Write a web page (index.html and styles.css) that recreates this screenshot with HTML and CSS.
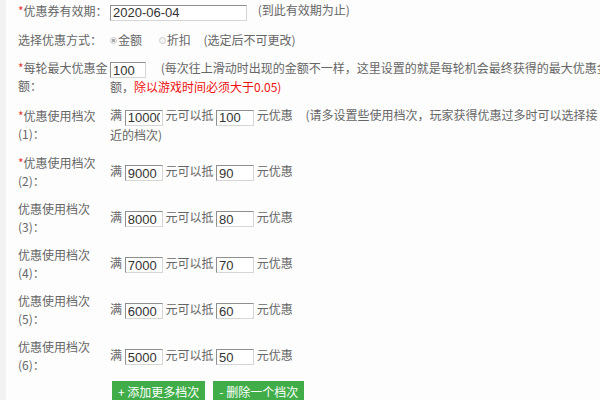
FILE: index.html
```html
<!DOCTYPE html>
<html lang="zh-CN">
<head>
    <meta charset="utf-8">
    <title>优惠券设置</title>
    <link rel="stylesheet" href="styles.css">
</head>
<body>
    <!-- 优惠券设置表单 -->
    <form class="panel" id="couponForm">
        <div class="row first">
            <label class="label"><span class="star">*</span>优惠券有效期：</label>
            <div class="field">
                <input type="text" class="ipt ipt-date" name="expire_date" value="2020-06-04">
                <span class="tip tip-date">(到此有效期为止)</span>
            </div>
        </div>
        <div class="row">
            <label class="label">选择优惠方式：</label>
            <div class="field">
                <span class="radio checked"></span>金额
                <span class="radio second"></span>折扣
                <span class="tip tip-mode">(选定后不可更改)</span>
            </div>
        </div>
        <div class="row">
            <label class="label"><span class="star">*</span>每轮最大优惠金额：</label>
            <div class="field">
                <input type="text" class="ipt ipt-max" name="max_amount" value="100">
                <span class="tip tip-max">(每次往上滑动时出现的金额不一样，这里设置的就是每轮机会最终获得的最大优惠金额，<span class="warn">除以游戏时间必须大于0.05)</span></span>
            </div>
        </div>
        <div class="row">
            <label class="label"><span class="star">*</span>优惠使用档次(1)：</label>
            <div class="field">
                满 <input type="text" class="ipt ipt-num" value="10000"> 元可以抵 <input type="text" class="ipt ipt-num" value="100"> 元优惠
                <span class="tip tip-level">(请多设置些使用档次，玩家获得优惠过多时可以选择接近的档次)</span>
            </div>
        </div>
        <div class="row">
            <label class="label"><span class="star">*</span>优惠使用档次(2)：</label>
            <div class="field">
                满 <input type="text" class="ipt ipt-num" value="9000"> 元可以抵 <input type="text" class="ipt ipt-num" value="90"> 元优惠
            </div>
        </div>
        <div class="row">
            <label class="label">优惠使用档次(3)：</label>
            <div class="field">
                满 <input type="text" class="ipt ipt-num" value="8000"> 元可以抵 <input type="text" class="ipt ipt-num" value="80"> 元优惠
            </div>
        </div>
        <div class="row">
            <label class="label">优惠使用档次(4)：</label>
            <div class="field">
                满 <input type="text" class="ipt ipt-num" value="7000"> 元可以抵 <input type="text" class="ipt ipt-num" value="70"> 元优惠
            </div>
        </div>
        <div class="row">
            <label class="label">优惠使用档次(5)：</label>
            <div class="field">
                满 <input type="text" class="ipt ipt-num" value="6000"> 元可以抵 <input type="text" class="ipt ipt-num" value="60"> 元优惠
            </div>
        </div>
        <div class="row">
            <label class="label">优惠使用档次(6)：</label>
            <div class="field">
                满 <input type="text" class="ipt ipt-num" value="5000"> 元可以抵 <input type="text" class="ipt ipt-num" value="50"> 元优惠
            </div>
        </div>
        <div class="btns">
            <button type="button" class="btn">+ 添加更多档次</button>
            <button type="button" class="btn">- 删除一个档次</button>
        </div>
    </form>
</body>
</html>
```

FILE: styles.css
```css
html, body {
    overflow: hidden;
}

body {
    margin: 0;
    padding: 0 0 0 6px;
    background-color: #f2f2f2;
    font-family: "Noto Sans CJK SC", "Liberation Sans", sans-serif;
    font-size: 12px;
    line-height: 18px;
    color: #666;
}

.panel {
    width: 591px;
    padding: 0 12px 20px;
    background-color: #fdfdfd;
}

.row {
    display: flex;
    align-items: center;
    padding: 5px 0;
}

.row.first {
    padding-top: 1px;
}

.label {
    flex: none;
    width: 92px;
}

.star {
    color: #e53935;
}

.field {
    flex: 1;
    min-width: 0;
}

.ipt {
    box-sizing: border-box;
    height: 16px;
    margin: 0;
    padding: 0 2px;
    border: 1px solid;
    border-color: #8f8f8f #d6d6d6 #d6d6d6 #8f8f8f;
    background: #fff;
    font-family: "Liberation Sans", "Noto Sans CJK SC", sans-serif;
    font-size: 13px;
    color: #333;
    vertical-align: -2px;
}

.ipt-date {
    width: 137px;
}

.ipt-max {
    width: 36px;
}

.ipt-num {
    width: 38px;
}

.tip-date {
    margin-left: 8px;
}

.tip-mode {
    margin-left: 10px;
}

.tip-max {
    margin-left: 12px;
}

.tip-level {
    margin-left: 10px;
}

.warn {
    color: #f01010;
}

.radio {
    display: inline-block;
    box-sizing: border-box;
    width: 7px;
    height: 7px;
    margin-right: 1px;
    border: 1px solid #ccc;
    border-radius: 50%;
    background: #f4f4f4;
    vertical-align: 1px;
}

.radio.checked {
    background: radial-gradient(circle, #aaa 0, #aaa 1.5px, #f4f4f4 2px);
}

.radio.second {
    margin-left: 14px;
}

.btns {
    display: flex;
    gap: 8px;
    margin-top: 2px;
    padding-left: 94px;
}

.btn {
    height: 22px;
    padding: 0 6px;
    border: none;
    background-color: #41ad49;
    font-family: "Noto Sans CJK SC", "Liberation Sans", sans-serif;
    font-size: 12px;
    color: #fff;
    cursor: pointer;
}
```
